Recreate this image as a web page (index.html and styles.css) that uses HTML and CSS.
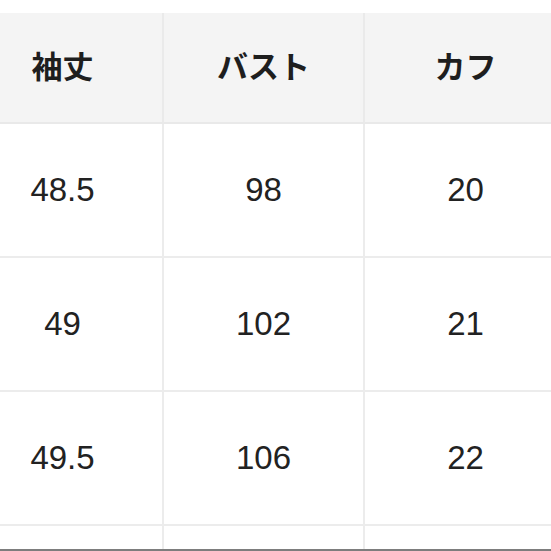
FILE: index.html
```html
<!DOCTYPE html>
<html lang="ja">
<head>
<meta charset="utf-8">
<link rel="stylesheet" href="styles.css">
</head>
<body>
<div class="page">
  <div class="table">
    <div class="cell head">袖丈</div>
    <div class="cell head">バスト</div>
    <div class="cell head last">カフ</div>
    <div class="cell">48.5</div>
    <div class="cell">98</div>
    <div class="cell last">20</div>
    <div class="cell">49</div>
    <div class="cell">102</div>
    <div class="cell last">21</div>
    <div class="cell">49.5</div>
    <div class="cell">106</div>
    <div class="cell last">22</div>
    <div class="cell"></div>
    <div class="cell"></div>
    <div class="cell last"></div>
  </div>
</div>
<div class="bottom-edge"></div>
</body>
</html>
```
FILE: styles.css
```css
html, body {
  margin: 0;
  padding: 0;
  background: #ffffff;
}
.page {
  width: 551px;
  height: 551px;
  overflow: hidden;
  padding-top: 13px;
  box-sizing: border-box;
}
.table {
  margin-left: -37px;
  display: grid;
  grid-template-columns: 201px 201px 201px;
  grid-template-rows: 111px;
  grid-auto-rows: 134px;
  width: 603px;
}
.cell {
  display: flex;
  align-items: center;
  justify-content: center;
  box-sizing: border-box;
  border-right: 2px solid #ececec;
  border-bottom: 2px solid #ececec;
  font-family: "Liberation Sans", Arial, sans-serif;
  font-size: 33px;
  color: #222222;
  background: #ffffff;
}
.cell.last {
  border-right: none;
}
.head {
  background: #f4f4f4;
  font-family: "Noto Sans CJK JP", "Noto Sans", sans-serif;
  font-weight: 700;
  font-size: 31px;
  color: #1e1e1e;
  padding-bottom: 6px;
  border-bottom-color: #e9e9e9;
  border-right-color: #eaeaea;
}
.bottom-edge {
  position: fixed;
  left: 0;
  right: 0;
  bottom: 0;
  height: 2px;
  background: #7d7d7d;
}
```
